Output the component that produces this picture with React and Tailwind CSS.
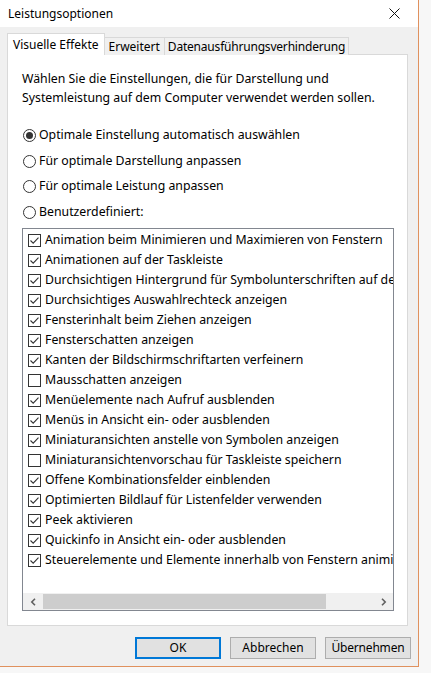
import React from "react";

const items = [
  ["Animation beim Minimieren und Maximieren von Fenstern", true],
  ["Animationen auf der Taskleiste", true],
  ["Durchsichtigen Hintergrund für Symbolunterschriften auf dem Desktop verwenden", true],
  ["Durchsichtiges Auswahlrechteck anzeigen", true],
  ["Fensterinhalt beim Ziehen anzeigen", true],
  ["Fensterschatten anzeigen", true],
  ["Kanten der Bildschirmschriftarten verfeinern", true],
  ["Mausschatten anzeigen", false],
  ["Menüelemente nach Aufruf ausblenden", true],
  ["Menüs in Ansicht ein- oder ausblenden", true],
  ["Miniaturansichten anstelle von Symbolen anzeigen", true],
  ["Miniaturansichtenvorschau für Taskleiste speichern", false],
  ["Offene Kombinationsfelder einblenden", true],
  ["Optimierten Bildlauf für Listenfelder verwenden", true],
  ["Peek aktivieren", true],
  ["Quickinfo in Ansicht ein- oder ausblenden", true],
  ["Steuerelemente und Elemente innerhalb von Fenstern animieren", true],
];

const radios = [
  ["Optimale Einstellung automatisch auswählen", true],
  ["Für optimale Darstellung anpassen", false],
  ["Für optimale Leistung anpassen", false],
  ["Benutzerdefiniert:", false],
];

function Check({ checked }) {
  return (
    <svg width="13" height="13" viewBox="0 0 13 13" className="shrink-0">
      <rect x="0.5" y="0.5" width="12" height="12" fill="#fff" stroke="#333" />
      {checked && (
        <path d="M2.5 6.5 L5.2 9.2 L10.5 3.6" fill="none" stroke="#333" strokeWidth="1.1" />
      )}
    </svg>
  );
}

function Radio({ checked }) {
  return (
    <svg width="13" height="13" viewBox="0 0 13 13" className="shrink-0">
      <circle cx="6.5" cy="6.5" r="6" fill="#fff" stroke="#333" />
      {checked && <circle cx="6.5" cy="6.5" r="3.5" fill="#333" />}
    </svg>
  );
}

export default function App() {
  return (
    <div
      className="w-[431px] h-[673px] bg-[#f7f7f7] text-[12.3px] text-black overflow-hidden"
      style={{ fontFamily: '"Segoe UI", "Noto Sans", sans-serif' }}
    >
      <div className="w-[419px] h-[667px] flex flex-col border-r border-b border-[#e0915e] bg-[#f0f0f0]">
        {/* Title bar */}
        <div className="h-[27px] bg-white flex items-center justify-between pl-[8px] pr-[12px] shrink-0">
          <span className="text-[12px] leading-none">Leistungsoptionen</span>
          <svg width="11" height="11" viewBox="0 0 11 11" className="mr-[6px]">
            <path d="M0.5 0.5 L10.5 10.5 M10.5 0.5 L0.5 10.5" stroke="#111" strokeWidth="1" />
          </svg>
        </div>

        {/* Body */}
        <div className="flex-1 flex flex-col pl-[7px] pr-[10px] pt-[6px]">
          {/* Tabs */}
          <div className="flex items-end h-[22px] relative z-10 text-[12px]">
            <div className="h-[22px] px-[5px] bg-white border border-b-0 border-[#d9d9d9] flex items-center">
              Visuelle Effekte
            </div>
            <div className="h-[18px] px-[4px] bg-[#f0f0f0] border border-l-0 border-b-0 border-[#d9d9d9] flex items-center">
              Erweitert
            </div>
            <div className="h-[18px] px-[3px] bg-[#f0f0f0] border border-l-0 border-b-0 border-[#d9d9d9] flex items-center tracking-[-0.2px]">
              Datenausführungsverhinderung
            </div>
          </div>

          {/* Panel */}
          <div className="h-[572px] -mt-px bg-white border border-[#d9d9d9] flex flex-col pl-[14px] pr-[13px] pt-[14px]">
            <p className="leading-[19px]">
              Wählen Sie die Einstellungen, die für Darstellung und
              <br />
              Systemleistung auf dem Computer verwendet werden sollen.
            </p>

            <div className="flex flex-col mt-[15px]">
              {radios.map(([label, on], i) => (
                <div key={i} className={"flex items-center gap-[3px] pl-px " + (i === 2 ? "h-[25px]" : "h-[26px]")}>
                  <Radio checked={on} />
                  <span className="whitespace-nowrap">{label}</span>
                </div>
              ))}
            </div>

            {/* List box */}
            <div className="mt-[3px] h-[383px] border border-[#828790] bg-white flex flex-col overflow-hidden">
              <div className="flex-1 flex flex-col pt-px overflow-hidden">
                {items.map(([label, on], i) => (
                  <div key={i} className="h-[20px] shrink-0 flex items-center gap-[4px] pl-[5px] whitespace-nowrap">
                    <Check checked={on} />
                    <span>{label}</span>
                  </div>
                ))}
              </div>
              {/* Horizontal scrollbar */}
              <div className="h-[17px] shrink-0 bg-[#f0f0f0] flex items-stretch">
                <div className="w-[20px] flex items-center justify-center">
                  <svg width="7" height="8" viewBox="0 0 7 8">
                    <path d="M5 0.8 L1.8 4 L5 7.2" fill="none" stroke="#606060" strokeWidth="1.6" />
                  </svg>
                </div>
                <div className="w-[283px] my-px bg-[#cdcdcd]" />
                <div className="flex-1" />
                <div className="w-[20px] flex items-center justify-center">
                  <svg width="7" height="8" viewBox="0 0 7 8">
                    <path d="M2 0.8 L5.2 4 L2 7.2" fill="none" stroke="#606060" strokeWidth="1.6" />
                  </svg>
                </div>
              </div>
            </div>
          </div>

          {/* Buttons */}
          <div className="flex justify-end gap-[9px] mt-[11px] mr-[-3px] text-[12px]">
            <button className="w-[86px] h-[22px] bg-[#e1e1e1] border-2 border-[#0078d7] flex items-center justify-center">
              OK
            </button>
            <button className="w-[86px] h-[22px] bg-[#e1e1e1] border border-[#adadad] flex items-center justify-center">
              Abbrechen
            </button>
            <button className="w-[86px] h-[22px] bg-[#e1e1e1] border border-[#adadad] flex items-center justify-center tracking-[-0.2px]">
              Übernehmen
            </button>
          </div>
        </div>
      </div>
    </div>
  );
}
